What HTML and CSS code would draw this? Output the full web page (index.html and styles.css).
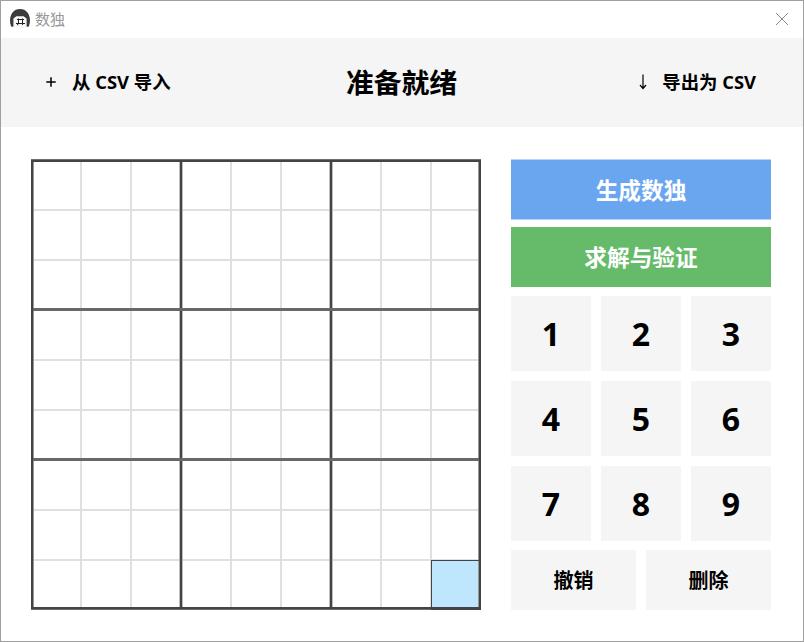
FILE: index.html
```html
<!DOCTYPE html>
<html lang="zh-CN">
<head>
<meta charset="utf-8">
<title>数独</title>
<link rel="stylesheet" href="styles.css">
</head>
<body>
<div class="window">
  <div class="titlebar">
    <svg class="logo" width="20" height="20" viewBox="0 0 20 20">
      <circle cx="10" cy="10" r="9.6" fill="#f7f7f7"/>
      <path d="M1.4 17.8C-.8 13.5-.3 7 2.5 3.5 4.300 1.200 7 .1 10 .1s5.700 1.100 7.500 3.400c2.800 3.500 3.300 10 1.100 14.300h-2V9.600l-3-2.300H6.400l-3 2.300v8.200z" fill="#3c3c3c"/>
      <path d="M7 10.500h7M6 14.500h9M8.500 9.500v5q0 1-1.500 1.500M12.500 9.500v6.500" fill="none" stroke="#222" stroke-width="1"/>
    </svg>
    <span class="caption">数独</span>
    <svg class="close" width="12" height="12" viewBox="0 0 12 12"><path d="M0 0l12 12M12 0L0 12" stroke="#8c8c8c" stroke-width="1"/></svg>
  </div>
  <header class="header">
    <div class="action import">
      <svg width="10" height="10" viewBox="0 0 10 10"><path d="M5 .3v9.400M.3 5h9.400" stroke="#000" stroke-width="1.500"/></svg>
      <span>从 CSV 导入</span>
    </div>
    <h1>准备就绪</h1>
    <div class="action export">
      <svg width="8" height="16" viewBox="0 0 8 16"><path d="M4 .5v14M1 11l3 3.500L7 11" fill="none" stroke="#000" stroke-width="1.200"/></svg>
      <span>导出为 CSV</span>
    </div>
  </header>
  <main class="content">
    <svg class="board" width="450" height="451" viewBox="0 0 450 451" shape-rendering="crispEdges">
      <path class="thin" d="M50 1v448M100 1v448M200 1v448M250 1v448M350 1v448M400 1v448M1 51h448M1 101h448M1 201h448M1 251h448M1 351h448M1 401h448"/>
      <path class="soft" d="M150 2v447M300 2v447"/>
      <path class="thick" d="M150 0v449M300 0v449"/>
      <path class="edge" d="M2.500 3v445M447.500 3v445"/>
      <path class="band" d="M2 150.500h446M2 300.500h446"/>
      <path class="edge-dark" d="M0 .5h450M0 450.500h400"/>
      <path class="thick" d="M1 1v449M449 1v449M0 2h450M0 449h450"/>
      <rect class="selected" x="401" y="402" width="46" height="46"/>
      <path class="outline" d="M400.500 449v-47.500h47M400 450.500h50"/>
    </svg>
    <section class="controls">
      <button class="generate">生成数独</button>
      <button class="solve">求解与验证</button>
      <div class="keypad">
        <button>1</button><button>2</button><button>3</button>
        <button>4</button><button>5</button><button>6</button>
        <button>7</button><button>8</button><button>9</button>
      </div>
      <div class="edit">
        <button>撤销</button><button>删除</button>
      </div>
    </section>
  </main>
</div>
</body>
</html>
```
FILE: styles.css
```css
* { box-sizing: border-box; }
body {
  margin: 0;
  font-family: "Open Sans", "Noto Sans CJK SC", sans-serif;
  color: #000;
}
.window {
  width: 804px;
  height: 642px;
  border: 1px solid #a0a0a0;
  background: #fff;
  overflow: hidden;
}
.titlebar {
  height: 37px;
  display: flex;
  align-items: center;
  padding: 0 15px 2px 9px;
}
.caption {
  margin-left: 5px;
  font-size: 15px;
  line-height: 20px;
  color: #999;
}
.close { margin-left: auto; }
.header {
  height: 89px;
  background: #f5f5f5;
  display: grid;
  grid-template-columns: 1fr auto 1fr;
  align-items: center;
  padding: 0 47px 0 45px;
}
.header h1 {
  margin: 0;
  padding: 0 0 2px 1px;
  font-size: 27.8px;
  line-height: 40px;
  font-weight: 700;
}
.action {
  display: flex;
  align-items: center;
  font-size: 18.4px;
  line-height: 26px;
  font-weight: 700;
  white-space: nowrap;
  padding-bottom: 1px;
}
.import { gap: 16px; }
.export { gap: 15px; justify-content: flex-end; }
.content {
  display: flex;
  gap: 30px;
  padding: 32px 0 0 30px;
}
.board { display: block; flex: none; }
.board path { fill: none; }
.thin { stroke: #e0e0e0; stroke-width: 2; }
.soft { stroke: #bcbcbc; stroke-width: 4; }
.thick { stroke: #444; stroke-width: 2; }
.band { stroke: #686868; stroke-width: 3; }
.edge { stroke: #999; stroke-width: 1; }
.edge-dark { stroke: #6e6e6e; stroke-width: 1; }
.board .selected { fill: #bee6fd; }
.outline { stroke: #444; stroke-width: 1; }
.controls { width: 260px; }
button {
  display: block;
  width: 100%;
  height: 60px;
  padding: 0;
  border: 0;
  font: 700 20px/30px "Open Sans", "Noto Sans CJK SC", sans-serif;
  color: #000;
  background: #f5f5f5;
}
.generate, .solve {
  padding-top: 2px;
  font-size: 22.7px;
  color: #fff;
}
.generate {
  height: 61px;
  background: #6aa6f0;
  border: solid #b5d3f8;
  border-width: 1px 0;
}
.solve {
  margin-top: 7px;
  background: #66bb6a;
}
.keypad {
  display: grid;
  grid-template-columns: repeat(3, 80px);
  gap: 10px;
  margin-top: 9px;
}
.keypad button {
  height: 75px;
  font-size: 32px;
}
.edit {
  display: grid;
  grid-template-columns: 1fr 1fr;
  gap: 10px;
  margin-top: 8px;
}
.edit button { padding-top: 2px; }
.edit { padding-top: 1px; }
```
